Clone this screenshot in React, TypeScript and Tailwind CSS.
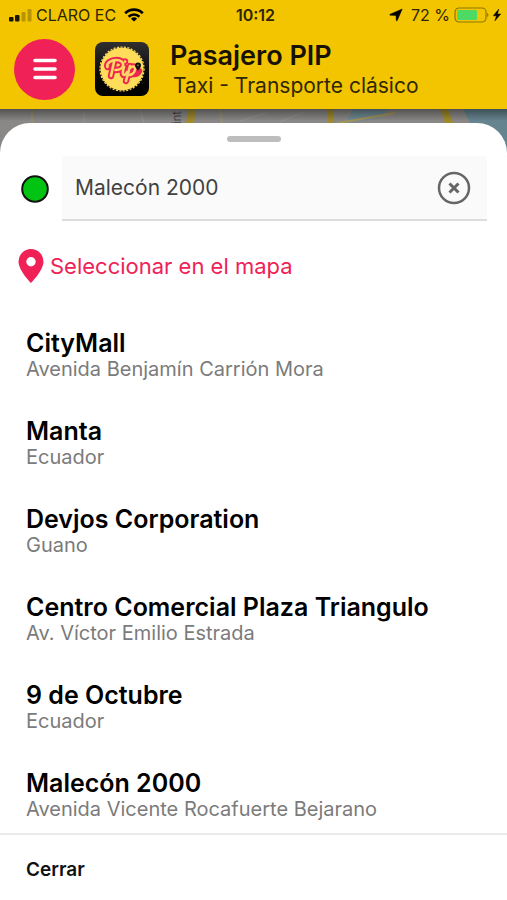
interface Place {
  name: string;
  address: string;
}

const places: Place[] = [
  { name: "CityMall", address: "Avenida Benjamín Carrión Mora" },
  { name: "Manta", address: "Ecuador" },
  { name: "Devjos Corporation", address: "Guano" },
  { name: "Centro Comercial Plaza Triangulo", address: "Av. Víctor Emilio Estrada" },
  { name: "9 de Octubre", address: "Ecuador" },
  { name: "Malecón 2000", address: "Avenida Vicente Rocafuerte Bejarano" },
];

function StatusBar() {
  return (
    <div className="grid h-[30px] grid-cols-3 items-center px-[6px] text-base text-[#2d2503]">
      <div className="flex items-center gap-1 whitespace-nowrap">
        <svg viewBox="0 0 26 14" className="h-[14px] w-[26px] shrink-0" fill="#1b1602">
          <rect x="3" y="9" width="4.5" height="4.5" rx="1" />
          <rect x="9" y="7" width="4.5" height="6.5" rx="1" />
          <rect x="15.5" y="4" width="4" height="9.5" rx="1" opacity="0.28" />
          <rect x="21.5" y="1" width="4" height="12.5" rx="1" opacity="0.28" />
        </svg>
        <span>CLARO EC</span>
        <svg viewBox="0 0 20 14" className="ml-1 h-[14px] w-5 shrink-0" fill="none" stroke="#000" strokeWidth="2.6">
          <path d="M1.2 5.2a12.6 12.6 0 0 1 17.6 0" />
          <path d="M4.6 8.7a7.8 7.8 0 0 1 10.8 0" />
          <path d="M10 13.6 6.9 10.7a4.5 4.5 0 0 1 6.2 0Z" fill="#000" stroke="none" />
        </svg>
      </div>
      <span className="pl-1 text-center font-semibold">10:12</span>
      <div className="flex items-center justify-end gap-1 whitespace-nowrap">
        <svg viewBox="0 0 14 14" className="mr-1 h-[14px] w-[14px]" fill="#000">
          <path d="M13.2 1 8.2 12.6c-.2.5-.8.4-.9-.1L7 7.4 1.2 7.2c-.5 0-.6-.7-.1-.9Z" stroke="#000" strokeWidth="0.5" />
        </svg>
        <span>72 %</span>
        <svg viewBox="0 0 35 16" className="h-4 w-[35px]" fill="none">
          <rect x="1" y="1" width="31" height="14" rx="4" stroke="#8d7606" strokeWidth="1.2" />
          <rect x="3" y="3" width="20" height="10" rx="1.5" fill="#4cd964" />
          <path d="M33.2 5.8c1.6.8 1.6 3.6 0 4.4Z" fill="#8d7606" />
        </svg>
        <svg viewBox="0 0 8 12" className="h-3 w-2" fill="#000">
          <path d="M5.8 0 .2 6.8h3.2L1.8 12 7.8 5H4.5Z" stroke="#000" strokeWidth="0.4" />
        </svg>
      </div>
    </div>
  );
}

function Logo() {
  return (
    <svg viewBox="0 0 54 54" className="h-[54px] w-[54px] shrink-0" fill="none">
      <defs>
        <linearGradient id="tile" x1="0" y1="0" x2="0" y2="1">
          <stop stopColor="#303030" />
          <stop offset="0.6" stopColor="#080808" />
          <stop offset="1" stopColor="#000" />
        </linearGradient>
      </defs>
      <rect width="54" height="54" rx="8" fill="url(#tile)" />
      <circle cx="27" cy="27" r="21.5" fill="#ffdc5a" />
      <circle cx="27" cy="27" r="22" stroke="#ffdc5a" strokeWidth="1.2" strokeDasharray="2 1.5" />
      <g strokeLinecap="round" strokeLinejoin="round">
        <g stroke="#ee2550" strokeWidth="6.4">
          <path d="M19 20 16 34M12.5 25c-1.5-4 4-7 9-7 9 0 9 10-1 10" />
          <path d="M29 25c-1 3-2 8 0 8 1 0 2-1 3-3M30 19.5v.1" />
          <path d="m35 24-4 15M34 27c3-4 7-3 6 1-1 4-5 6-7 4M39 32c3 0 4-1 5-3" />
        </g>
        <g stroke="#ffd766" strokeWidth="2.6">
          <path d="M19 20 16 34M12.5 25c-1.5-4 4-7 9-7 9 0 9 10-1 10" />
          <path d="M29 25c-1 3-2 8 0 8 1 0 2-1 3-3M30 19.5v.1" />
          <path d="m35 24-4 15M34 27c3-4 7-3 6 1-1 4-5 6-7 4" />
        </g>
      </g>
      <path d="M43 29c-1-2-3-3.5-3-5.5a3 3 0 0 1 6 0c0 2-2 3.5-3 5.500Z" fill="#111" />
      <circle cx="43" cy="23.3" r="0.9" fill="#9a8235" />
    </svg>
  );
}

function MapBackground() {
  return (
    <svg
      viewBox="0 0 507 60"
      preserveAspectRatio="none"
      className="absolute inset-x-0 top-0 h-[60px] w-full"
      aria-hidden="true"
    >
      <defs>
        <linearGradient id="shade" x1="0" y1="0" x2="0" y2="1">
          <stop stopOpacity="0.4" />
          <stop offset="0.2" stopOpacity="0" />
        </linearGradient>
      </defs>
      <rect width="507" height="60" fill="#898886" />
      <path d="M353 0h35l-8 9-34 5Z" fill="#6f8992" />
      <path d="M463 0h44v60h-20L470 14Z" fill="#668490" />
      <path d="M188 0h8l-2 14h-8ZM327 0h6l1 14h-6ZM440 0h8l5 14h-8Z" fill="#a08b2c" />
      <path d="M338 14 395 4" stroke="#a3945a" strokeWidth="2" />
      <path d="M32 0v14M220 0l2 14" stroke="#95906e" strokeWidth="2" />
      <path d="M84 2v12M140 1l4 13M240 12l26-8M280 13l24-10" stroke="#959492" />
      <text transform="translate(181 15) rotate(-90)" fontSize="11" fill="#454545">
        int
      </text>
      <rect width="507" height="60" fill="url(#shade)" />
    </svg>
  );
}

export default function App() {
  return (
    <div className="flex min-h-screen flex-col bg-[#898886] font-[Inter,'Liberation_Sans',sans-serif]">
      <header className="bg-[#f3c500] pb-[9px]">
        <StatusBar />
        <div className="mt-2 flex items-center gap-5 pl-[14px]">
          <button
            type="button"
            aria-label="Menú"
            className="flex h-[61px] w-[61px] shrink-0 items-center justify-center rounded-full bg-[#ef2156]"
          >
            <svg viewBox="0 0 24 22" className="h-[22px] w-6" stroke="#fff" strokeWidth="3.6" strokeLinecap="round">
              <path d="M2 2.5h20M2 11h20M2 19.5h20" />
            </svg>
          </button>
          <Logo />
          <div className="pt-[2px]">
            <h1 className="pl-px text-[27px] leading-8 font-semibold text-[#171202]">Pasajero PIP</h1>
            <p className="pl-1 text-[21px] leading-7 text-[#302704]">Taxi - Transporte clásico</p>
          </div>
        </div>
      </header>

      <main className="relative flex grow flex-col pt-[14px]">
        <MapBackground />
        <div className="relative flex grow flex-col rounded-t-[30px] bg-white pt-[13px]">
          <div className="mx-auto h-[6px] w-[54px] rounded-full bg-[#bdbdbd]" />

          <div className="mt-[14px] flex items-center pr-5 pl-[21px]">
            <svg viewBox="0 0 28 28" className="h-7 w-7 shrink-0">
              <circle cx="14" cy="14" r="12.8" fill="#00c411" stroke="#111" strokeWidth="2" />
            </svg>
            <div className="ml-[13px] flex h-[65px] grow items-center border-b-2 border-[#dcdcdc] bg-[#fafafa] pr-4 pl-[13px]">
              <input
                type="text"
                aria-label="Origen"
                defaultValue="Malecón 2000"
                className="min-w-0 grow bg-transparent text-[21px] text-[#424242] outline-none"
              />
              <button type="button" aria-label="Borrar" className="shrink-0">
                <svg viewBox="0 0 34 34" className="h-[34px] w-[34px]" fill="none" stroke="#666">
                  <circle cx="17" cy="17" r="15" strokeWidth="2.5" />
                  <path d="m12.5 12.5 9 9M21.5 12.5l-9 9" strokeWidth="3" />
                </svg>
              </button>
            </div>
          </div>

          <button type="button" className="mt-7 flex items-center gap-[6px] self-start pl-[18px] text-[22px] leading-8 text-[#ef2156]">
            <svg viewBox="0 0 26 34" className="h-[34px] w-[26px]" fill="#ef2156">
              <path fillRule="evenodd" d="M13 0a12.5 12.5 0 0 1 12.5 12.5C25.5 21.5 13 34 13 34S.5 21.5.5 12.5A12.5 12.5 0 0 1 13 0Zm0 8a4.7 4.7 0 1 0 0 9.4A4.7 4.7 0 0 0 13 8Z" />
            </svg>
            Seleccionar en el mapa
          </button>

          <ul className="mt-[46px] flex flex-col gap-9 pb-3 pl-[26px]">
            {places.map((place) => (
              <li key={place.name}>
                <h2 className="text-[25px] leading-7 font-semibold text-black">{place.name}</h2>
                <p className="text-xl leading-6 text-[#7b7b7b]">{place.address}</p>
              </li>
            ))}
          </ul>

          <div className="mt-auto border-t-2 border-[#ebebeb] px-[26px] pt-[21px] pb-4">
            <button type="button" className="text-[19px] leading-7 font-semibold text-[#111]">
              Cerrar
            </button>
          </div>
        </div>
      </main>
    </div>
  );
}
